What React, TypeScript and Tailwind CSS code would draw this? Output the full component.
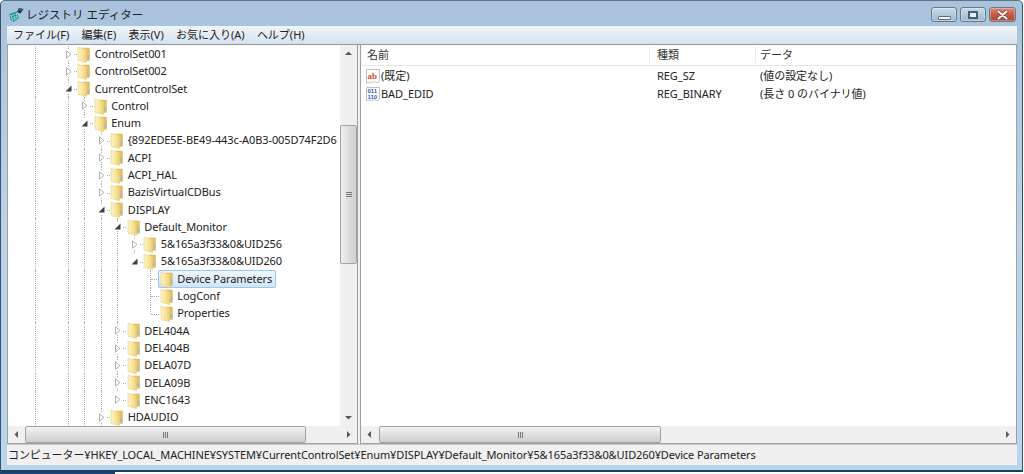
import React from 'react';

const FONT = '"Noto Sans", "Noto Sans CJK JP", sans-serif';

type Row = {
  name: string;
  col: number;
  exp?: 'open' | 'closed';
  guides: number[];
  elbow?: boolean;
  selected?: boolean;
};

const rows: Row[] = [
  { name: 'ControlSet001', col: 2, exp: 'closed', guides: [0, 2] },
  { name: 'ControlSet002', col: 2, exp: 'closed', guides: [0, 2] },
  { name: 'CurrentControlSet', col: 2, exp: 'open', guides: [0, 2] },
  { name: 'Control', col: 3, exp: 'closed', guides: [0, 2, 3] },
  { name: 'Enum', col: 3, exp: 'open', guides: [0, 2, 3] },
  { name: '{892EDE5E-BE49-443c-A0B3-005D74F2D6', col: 4, exp: 'closed', guides: [0, 2, 3, 4] },
  { name: 'ACPI', col: 4, exp: 'closed', guides: [0, 2, 3, 4] },
  { name: 'ACPI_HAL', col: 4, exp: 'closed', guides: [0, 2, 3, 4] },
  { name: 'BazisVirtualCDBus', col: 4, exp: 'closed', guides: [0, 2, 3, 4] },
  { name: 'DISPLAY', col: 4, exp: 'open', guides: [0, 2, 3, 4] },
  { name: 'Default_Monitor', col: 5, exp: 'open', guides: [0, 2, 3, 4, 5] },
  { name: '5&165a3f33&0&UID256', col: 6, exp: 'closed', guides: [0, 2, 3, 4, 5, 6] },
  { name: '5&165a3f33&0&UID260', col: 6, exp: 'open', guides: [0, 2, 3, 4, 5] },
  { name: 'Device Parameters', col: 7, elbow: true, selected: true, guides: [0, 2, 3, 4, 5, 7] },
  { name: 'LogConf', col: 7, elbow: true, guides: [0, 2, 3, 4, 5, 7] },
  { name: 'Properties', col: 7, elbow: true, guides: [0, 2, 3, 4, 5] },
  { name: 'DEL404A', col: 5, exp: 'closed', guides: [0, 2, 3, 4, 5] },
  { name: 'DEL404B', col: 5, exp: 'closed', guides: [0, 2, 3, 4, 5] },
  { name: 'DELA07D', col: 5, exp: 'closed', guides: [0, 2, 3, 4, 5] },
  { name: 'DELA09B', col: 5, exp: 'closed', guides: [0, 2, 3, 4, 5] },
  { name: 'ENC1643', col: 5, exp: 'closed', guides: [0, 2, 3, 4] },
  { name: 'HDAUDIO', col: 4, exp: 'closed', guides: [0, 2, 3, 4] },
];

function Folder() {
  return (
    <svg width="14" height="17" viewBox="0 0 14 17" className="shrink-0">
      <defs>
        <linearGradient id="ff" x1="0" y1="0" x2="1" y2="0">
          <stop offset="0" stopColor="#fdf4c8" />
          <stop offset="0.6" stopColor="#f7e296" />
          <stop offset="1" stopColor="#eccf70" />
        </linearGradient>
      </defs>
      <path d="M6 2h6.5v12.5H6z" fill="#e3bf62" stroke="#d8b866" strokeWidth="0.5" />
      <path d="M1 1.2l8.5 2.3v13L1 14.3z" fill="url(#ff)" stroke="#e8cf84" strokeWidth="0.6" />
      <rect x="10.5" y="9.5" width="2" height="3.5" fill="#8fbcdc" opacity="0.85" />
    </svg>
  );
}

function Expander({ open }: { open: boolean }) {
  return (
    <svg width="8" height="9" viewBox="0 0 8 9" className="shrink-0">
      {open ? (
        <path d="M6.5 1.5v6h-6z" fill="#404040" />
      ) : (
        <path d="M1.5 0.8l4.5 3.7-4.5 3.7z" fill="#fff" stroke="#b0b0b0" />
      )}
    </svg>
  );
}

function TreeRow({ row }: { row: Row }) {
  const cols = [0, 1, 2, 3, 4, 5, 6, 7].filter((c) => c < row.col);
  return (
    <div className="flex h-[17.3px] items-stretch whitespace-nowrap">
      {cols.map((c) => (
        <div key={c} className="flex w-[16.5px] shrink-0 justify-center">
          {row.guides.includes(c) && <div className="h-full border-l border-dotted border-[#b0b0b0]" />}
        </div>
      ))}
      <div className="relative flex w-[16.5px] shrink-0 items-center">
        {row.guides.includes(row.col) && (
          <div className="ml-[8px] h-full border-l border-dotted border-[#b0b0b0]" />
        )}
        {row.elbow && !row.guides.includes(row.col) && (
          <div className="mb-[8px] ml-[8px] h-1/2 border-l border-dotted border-[#b0b0b0]" />
        )}
        <div className="absolute top-1/2 left-[9px] w-[8px] border-t border-dotted border-[#b0b0b0]" />
        {row.exp && (
          <div className="absolute top-[4px] left-[5px] bg-white">
            <Expander open={row.exp === 'open'} />
          </div>
        )}
      </div>
      <div
        className={
          row.selected
            ? 'z-10 -ml-[1px] flex items-center rounded-[2px] border border-[#9ac6ea] bg-gradient-to-b from-[#eef6fd] to-[#d2e6f8] pr-[3px] pl-[1px] text-[11px] tracking-[-0.1px] text-[#222]'
            : 'z-10 -ml-[1px] flex items-center border border-transparent pl-[1px] text-[11px] tracking-[-0.1px] text-[#222]'
        }
      >
        <Folder />
        <span className="pl-[3.5px]">{row.name}</span>
      </div>
    </div>
  );
}

function Arrow({ dir }: { dir: 'up' | 'down' | 'left' | 'right' }) {
  const d = {
    up: 'M0 4L3.5 0.5 7 4z',
    down: 'M0 1L3.5 4.5 7 1z',
    left: 'M4 0L0.5 3.5 4 7z',
    right: 'M1 0L4.5 3.5 1 7z',
  }[dir];
  const size = dir === 'up' || dir === 'down' ? { w: 7, h: 5 } : { w: 5, h: 7 };
  return (
    <svg width={size.w} height={size.h} viewBox={`0 0 ${size.w} ${size.h}`}>
      <path d={d} fill="#5a5a5a" />
    </svg>
  );
}

function HScrollbar({ thumb }: { thumb: string }) {
  return (
    <div className="flex h-[17px] shrink-0 items-stretch bg-[#f0f0f0]">
      <div className="flex w-[17px] shrink-0 items-center justify-center">
        <Arrow dir="left" />
      </div>
      <div className={`flex items-center justify-center rounded-[2px] border border-[#a3a3a3] bg-gradient-to-b from-[#f2f2f2] via-[#e0e0e0] to-[#cfcfcf] ${thumb}`}>
        <span className="flex gap-[1px]">
          <i className="h-[6px] w-[1px] bg-[#777]" />
          <i className="h-[6px] w-[1px] bg-[#777]" />
          <i className="h-[6px] w-[1px] bg-[#777]" />
        </span>
      </div>
      <div className="flex-1" />
      <div className="flex w-[17px] shrink-0 items-center justify-center">
        <Arrow dir="right" />
      </div>
    </div>
  );
}

function ValueIcon({ kind }: { kind: 'sz' | 'bin' }) {
  return (
    <svg width="14" height="15" viewBox="0 0 14 15" className="shrink-0">
      <path d="M0.5 0.5h13v11l-2 2.5-3-1.5-3 1.5-2-1-3 1z" fill="#fff" stroke="#c0c0c0" />
      {kind === 'sz' ? (
        <text x="1.5" y="9.5" fontSize="9" fontWeight="700" fontFamily='"Liberation Serif", serif' fill="#d9502a">
          ab
        </text>
      ) : (
        <g fontSize="6" fontWeight="700" fontFamily='"Liberation Sans", sans-serif' fill="#2f62b5">
          <text x="1.5" y="6">011</text>
          <text x="1.5" y="12">110</text>
        </g>
      )}
    </svg>
  );
}

function CaptionButton({ children, className }: { children: React.ReactNode; className: string }) {
  return (
    <div className={`flex h-[15px] items-center justify-center rounded-[3px] border border-[#66798c] shadow-[inset_0_0_0_1px_rgba(255,255,255,0.3)] ${className}`}>
      {children}
    </div>
  );
}

export default function App() {
  return (
    <div className="flex h-[474px] w-[1024px] flex-col overflow-hidden bg-white" style={{ fontFamily: FONT }}>
      <div className="flex h-[472px] w-[1023px] shrink-0 flex-col rounded-t-[5px] border-x border-t border-b-2 border-x-[#38536b] border-t-[#5f7286] border-b-[#17465c] bg-gradient-to-b from-[#a9c3dc] via-[#bcd3e8] to-[#b9d5ee] text-[#222]">
        {/* Title bar */}
        <div className="flex h-[25px] shrink-0 items-center pt-[2px] pr-[6px] pl-[8px]">
          <svg width="15" height="16" viewBox="0 0 15 16" className="shrink-0">
            <path d="M0.5 7l7-2.5 2.5 6.5-5.5 4-3-2.5z" fill="#16807f" />
            <path d="M2 7.5l1.5 6M4.5 6.5l1.5 7M7 5.5l1.5 6M1 9l7-2.5M2 11.5l7-2.5M3 13.5l5-2.5" stroke="#8fe6de" strokeWidth="0.8" />
            <path d="M8 5l2-4 4.5 1-3 4.5z" fill="#223441" />
            <path d="M10 2.5l3 0.5" stroke="#6f8ea0" strokeWidth="0.8" />
          </svg>
          <span className="ml-[2px] text-[11.5px] text-[#222]">レジストリ エディター</span>
          <div className="ml-auto flex items-center gap-[3px]">
            <CaptionButton className="w-[26px] bg-gradient-to-b from-[#c9dbec] to-[#a0b8cf]">
              <div className="mt-[6px] h-[4px] w-[13px] rounded-[1px] border border-[#5d6d7d] bg-[#eef2f6]" />
            </CaptionButton>
            <CaptionButton className="w-[26px] bg-gradient-to-b from-[#c9dbec] to-[#a0b8cf]">
              <div className="h-[8px] w-[10px] border-2 border-[#4f5d6b] bg-[#e8eef5]" />
            </CaptionButton>
            <CaptionButton className="w-[27px] border-[#7a4236] bg-gradient-to-b from-[#de8a76] via-[#c65a44] to-[#b34a36]">
              <svg width="13" height="10" viewBox="0 0 13 10">
                <path d="M2.5 1.5l8 7M10.5 1.5l-8 7" stroke="#6b3a30" strokeWidth="3.4" strokeLinecap="round" />
                <path d="M2.5 1.5l8 7M10.5 1.5l-8 7" stroke="#f4f4f4" strokeWidth="2.2" strokeLinecap="round" />
              </svg>
            </CaptionButton>
          </div>
        </div>

        {/* Menu */}
        <div className="mr-[5px] ml-[6px] flex h-[18px] shrink-0 items-center gap-[12.25px] bg-gradient-to-b from-[#f0f5fa] to-[#d5e2ee] pl-[6px] text-[11px] text-[#222]">
          <span>ファイル(F)</span>
          <span>編集(E)</span>
          <span>表示(V)</span>
          <span>お気に入り(A)</span>
          <span>ヘルプ(H)</span>
        </div>

        {/* Panes */}
        <div className="mr-[5px] ml-[6px] flex h-[400px] shrink-0 gap-[2px] border-t border-[#8d99a5] bg-[#f0f0f0]">
          <div className="flex w-[351px] shrink-0 flex-col border-x border-b border-[#a0a0a0] bg-white">
            <div className="flex min-h-0 flex-1">
              <div className="min-w-0 flex-1 overflow-hidden pt-[0.5px] pl-[18.75px]">
                {rows.map((r) => (
                  <TreeRow key={r.name} row={r} />
                ))}
              </div>
              <div className="flex w-[17px] shrink-0 flex-col bg-[#f0f0f0]">
                <div className="flex h-[17px] items-center justify-center">
                  <Arrow dir="up" />
                </div>
                <div className="mt-[63px] flex h-[139px] items-center justify-center rounded-[2px] border border-[#a3a3a3] bg-gradient-to-r from-[#f0f0f0] via-[#dedede] to-[#cfcfcf]">
                  <span className="flex flex-col gap-[1px]">
                    <i className="h-[1px] w-[6px] bg-[#777]" />
                    <i className="h-[1px] w-[6px] bg-[#777]" />
                    <i className="h-[1px] w-[6px] bg-[#777]" />
                  </span>
                </div>
                <div className="flex-1" />
                <div className="flex h-[17px] items-center justify-center">
                  <Arrow dir="down" />
                </div>
              </div>
            </div>
            <HScrollbar thumb="w-[281px]" />
          </div>

          <div className="flex min-w-0 flex-1 flex-col border-x border-b border-[#a0a0a0] bg-white">
            <div className="flex h-[21px] shrink-0 items-center border-b border-[#e8e8e8] text-[11px] text-[#333]">
              <div className="w-[289px] border-r border-[#ececec] pl-[6px]">名前</div>
              <div className="w-[106px] border-r border-[#ececec] pl-[7px]">種類</div>
              <div className="pl-[4px]">データ</div>
            </div>
            <div className="min-h-0 flex-1 pt-[1px] pl-[5px] text-[11px] tracking-[-0.05px]">
              <div className="flex h-[18px] items-center">
                <div className="flex w-[291px] items-center gap-[1px]">
                  <ValueIcon kind="sz" />
                  <span>(既定)</span>
                </div>
                <div className="w-[103px]">REG_SZ</div>
                <div>(値の設定なし)</div>
              </div>
              <div className="flex h-[18px] items-center pt-[1px]">
                <div className="flex w-[291px] items-center gap-[1px]">
                  <ValueIcon kind="bin" />
                  <span>BAD_EDID</span>
                </div>
                <div className="w-[103px]">REG_BINARY</div>
                <div>(長さ 0 のバイナリ値)</div>
              </div>
            </div>
            <HScrollbar thumb="ml-[1px] w-[282px]" />
          </div>
        </div>

        {/* Status bar */}
        <div className="mr-[5px] ml-[6px] flex h-[21px] shrink-0 items-center border-t border-[#c8c8c8] bg-[#f0f0f0] pl-[1px] text-[11px] tracking-[-0.1px]">
          コンピューター¥HKEY_LOCAL_MACHINE¥SYSTEM¥CurrentControlSet¥Enum¥DISPLAY¥Default_Monitor¥5&165a3f33&0&UID260¥Device Parameters
        </div>
      </div>

      {/* Edge of the window behind */}
      <div className="h-[2px] w-[115px] bg-[#1c3f78]" />
    </div>
  );
}
